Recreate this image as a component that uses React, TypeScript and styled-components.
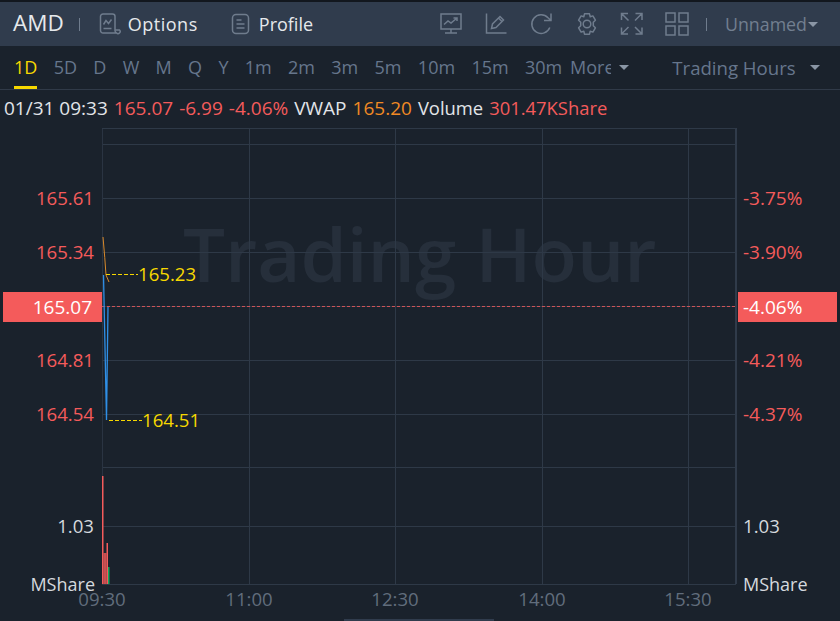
import styled, { createGlobalStyle } from "styled-components";

const FONT = `"Open Sans", "Noto Sans", "Liberation Sans", sans-serif`;
const RED = "#f45b5b";
const YELLOW = "#f7d800";
const GRID = "#2e3947";

const GlobalStyle = createGlobalStyle`
  html, body {
    margin: 0;
    padding: 0;
    background: #1a222c;
  }
  * {
    box-sizing: border-box;
  }
`;

const tabs = ["1D", "5D", "D", "W", "M", "Q", "Y", "1m", "2m", "3m", "5m", "10m", "15m", "30m"];
const priceLabels = [
  { y: 73, text: "165.61" },
  { y: 127, text: "165.34" },
  { y: 235, text: "164.81" },
  { y: 289, text: "164.54" },
];
const percentLabels = [
  { y: 73, text: "-3.75%" },
  { y: 127, text: "-3.90%" },
  { y: 235, text: "-4.21%" },
  { y: 289, text: "-4.37%" },
];
const hLines = [19, 73, 127, 181, 235, 289, 342, 401, 459];
const vLines = [147, 293, 440, 586];
const times = [
  { x: 102, text: "09:30" },
  { x: 249, text: "11:00" },
  { x: 395, text: "12:30" },
  { x: 542, text: "14:00" },
  { x: 688, text: "15:30" },
];

const IconSvg = ({ children }: { children: React.ReactNode }) => (
  <svg width="24" height="24" viewBox="0 0 24 24" fill="none" stroke="#6f7c8d" strokeWidth="1.5">
    {children}
  </svg>
);

const OptionsIcon = () => (
  <IconSvg>
    <path d="M18.500 21H5a2.500 2.500 0 0 1-2.500-2.500V4.500A2.500 2.500 0 0 1 5 2h9.500A2.500 2.500 0 0 1 17 4.500V18a3 3 0 0 0 1.500 3 2 2 0 0 0 3-3H17" />
    <path d="M5.500 12.500 8 8.500l2.500 3 3-4M5.500 16.500h8" />
  </IconSvg>
);

const ProfileIcon = () => (
  <IconSvg>
    <rect x="3.500" y="2.500" width="16" height="19" rx="3.500" />
    <path d="M7.500 8h5M7.500 12h8M7.500 16h8" />
  </IconSvg>
);

const MonitorIcon = () => (
  <IconSvg>
    <rect x="1" y="2" width="20" height="15" />
    <path d="M11 17v3.500M5 21h12M4 12.500l4-3.500 3 2 6-5M13.500 6H17v3" />
  </IconSvg>
);

const DrawIcon = () => (
  <IconSvg>
    <path d="M1.500 1.500v19.500h20" />
    <path d="M6.500 16.500l1-4.500L15 4.500l3.500 3.500L11 15.500zM13.500 6l3.500 3.500" />
  </IconSvg>
);

const RefreshIcon = () => (
  <IconSvg>
    <path d="M19.800 15.500A9.300 9.300 0 1 1 18 5.800L20.500 8M21 1.500V8.500h-7" />
  </IconSvg>
);

const GearIcon = () => (
  <IconSvg>
    <circle cx="12" cy="12" r="3.800" />
    <path d="M9.500 1.800h5l.7 3 2.700-.9 2.500 4.300-2.100 2 0 3.600 2.100 2-2.500 4.300-2.700-.9-.7 3h-5l-.7-3-2.700.9-2.500-4.300 2.100-2 0-3.600-2.100-2 2.500-4.300 2.700.9z" strokeLinejoin="round" />
  </IconSvg>
);

const ExpandIcon = () => (
  <IconSvg>
    <path d="M1.500 8V1.500H8M1.500 1.500l7 7M22 8V1.500h-6.500M22 1.500l-7 7M1.500 15.500V22H8M1.500 22l7-7M22 15.500V22h-6.500M22 22l-7-7" />
  </IconSvg>
);

const LayoutIcon = () => (
  <IconSvg>
    <rect x="1" y="1" width="9" height="9" />
    <rect x="14" y="1" width="9" height="9" />
    <rect x="1" y="14" width="9" height="9" />
    <rect x="14" y="14" width="9" height="9" />
  </IconSvg>
);

const App = () => {
  return (
    <Page>
      <GlobalStyle />
      <Header>
        <Symbol>AMD</Symbol>
        <Divider />
        <HeaderLink $width={131}>
          <OptionsIcon />
          <LinkText $spacing={0.5}>Options</LinkText>
        </HeaderLink>
        <HeaderLink $width={130}>
          <ProfileIcon />
          <LinkText>Profile</LinkText>
        </HeaderLink>
        <Tools>
          <MonitorIcon />
          <DrawIcon />
          <RefreshIcon />
          <GearIcon />
          <ExpandIcon />
          <LayoutIcon />
        </Tools>
        <Divider />
        <Unnamed>
          Unnamed
          <Caret />
        </Unnamed>
      </Header>

      <TabRow>
        {tabs.map((t, i) => (
          <Tab key={t} $active={i === 0}>
            {t}
          </Tab>
        ))}
        <MoreText>More</MoreText>
        <Caret />
        <Session>
          Trading Hours
          <Caret />
        </Session>
      </TabRow>

      <InfoRow>
        <span>01/31 09:33</span>
        <Value $color={RED}>165.07</Value>
        <Value $color={RED}>-6.99</Value>
        <Value $color={RED}>-4.06%</Value>
        <span>VWAP</span>
        <Value $color="#f08a24">165.20</Value>
        <Value $color="#e2e5e9" $size={18.4}>Volume</Value>
        <Value $color={RED} $size={18.4}>301.47KShare</Value>
      </InfoRow>

      <Chart>
        <LeftAxis>
          {priceLabels.map((l) => (
            <AxisLabel key={l.text} $y={l.y} $color={RED}>
              {l.text}
            </AxisLabel>
          ))}
          <PriceTag $align="right">165.07</PriceTag>
          <AxisLabel $y={401} $color="#d5d9de">1.03</AxisLabel>
          <AxisLabel $y={459} $color="#d5d9de" $size={18} $inset={7}>MShare</AxisLabel>
        </LeftAxis>

        <Plot>
          <Watermark>Trading Hour</Watermark>
          <PlotSvg width="634" height="460" viewBox="0 0 634 460">
            {hLines.map((y) => (
              <line key={y} x1="0" x2="634" y1={y + 0.5} y2={y + 0.5} stroke={GRID} />
            ))}
            {vLines.map((x) => (
              <line key={x} x1={x + 0.5} x2={x + 0.5} y1="3" y2="459" stroke={GRID} />
            ))}
            <rect x="0" y="3" width="1" height="456" fill="#2a3442" />
            <rect x="633" y="3" width="2" height="456" fill="#303b4a" />
            <rect x="0" y="3" width="634" height="1" fill={GRID} />
            <line x1="0" x2="634" y1="181.500" y2="181.500" stroke={RED} strokeDasharray="3 2" strokeOpacity="0.8" />
            <path d="M1 112 Q3 134 4 150 L7 157" stroke="#d98a2b" fill="none" />
            <path d="M1.500 150 L4.500 295 L6 182" stroke="#2f8fe6" fill="none" strokeWidth="1.300" />
            <path d="M4 149.500H36M7 295.500H40" stroke={YELLOW} strokeDasharray="4 2" />
            <rect x="0" y="351" width="1.500" height="108" fill={RED} />
            <rect x="1.500" y="428" width="3" height="31" fill={RED} fillOpacity="0.8" />
            <rect x="4.500" y="418" width="1.500" height="41" fill={RED} />
            <rect x="6" y="442" width="1.500" height="17" fill="#12a85f" />
          </PlotSvg>
          <PriceNote $x={36} $y={149}>165.23</PriceNote>
          <PriceNote $x={40} $y={295}>164.51</PriceNote>
          <TimeAxis>
            {times.map((t) => (
              <TimeLabel key={t.text} $x={t.x - 102}>
                {t.text}
              </TimeLabel>
            ))}
          </TimeAxis>
        </Plot>

        <RightAxis>
          {percentLabels.map((l) => (
            <AxisLabel key={l.text} $y={l.y} $color={RED} $side="left" $size={19}>
              {l.text}
            </AxisLabel>
          ))}
          <PriceTag $align="left">-4.06%</PriceTag>
          <AxisLabel $y={401} $color="#d5d9de" $side="left">1.03</AxisLabel>
          <AxisLabel $y={459} $color="#d5d9de" $side="left" $size={18}>MShare</AxisLabel>
        </RightAxis>
      </Chart>
      <ScrollThumb />
    </Page>
  );
};

export default App;

const Page = styled.div`
  position: relative;
  width: 840px;
  height: 621px;
  overflow: hidden;
  background: #1a222c;
  font-family: ${FONT};
  border-top: 2px solid #12171e;
`;

const Header = styled.div`
  height: 44px;
  display: flex;
  align-items: center;
  padding: 0 0 0 13px;
  background: #303c4d;
  color: #e6e9ec;
`;

const Symbol = styled.div`
  font-size: 22.5px;
  line-height: 24px;
  margin: -2px 15px 0 0;
`;

const Divider = styled.div`
  width: 1px;
  height: 13px;
  background: #6f7c8d;
  margin-right: 18px;
`;

const HeaderLink = styled.div<{ $width: number }>`
  width: ${(props) => props.$width}px;
  display: flex;
  align-items: center;
  gap: 6px;
`;

const LinkText = styled.span<{ $spacing?: number }>`
  font-size: 18px;
  letter-spacing: ${(props) => props.$spacing ?? 0}px;
`;

const Tools = styled.div`
  display: flex;
  align-items: center;
  gap: 21px;
  margin-left: auto;
  margin-right: 17px;
`;

const Unnamed = styled.div`
  display: flex;
  align-items: center;
  gap: 1px;
  width: 115px;
  font-size: 17.8px;
  color: #727f90;
`;

const Caret = styled.span`
  display: inline-block;
  width: 0;
  height: 0;
  border-left: 5px solid transparent;
  border-right: 5px solid transparent;
  border-top: 5px solid #8a96a5;
`;

const TabRow = styled.div`
  height: 44px;
  display: flex;
  align-items: center;
  padding-left: 14px;
  gap: 16.3px;
  font-size: 18px;
  color: #66768c;
  border-bottom: 1px solid #303a48;
`;

const Tab = styled.div<{ $active?: boolean }>`
  height: 43px;
  line-height: 42px;
  color: ${(props) => (props.$active ? YELLOW : "#66768c")};
  border-bottom: 3px solid ${(props) => (props.$active ? YELLOW : "transparent")};
`;

const MoreText = styled.div`
  width: 41px;
  overflow: hidden;
  margin-left: -8.4px;
  margin-right: -8.4px;
  margin-bottom: 1px;
`;

const Session = styled.div`
  margin-left: 27px;
  display: flex;
  align-items: center;
  gap: 14px;
  white-space: nowrap;
  font-size: 18.6px;
`;

const InfoRow = styled.div`
  height: 35px;
  display: flex;
  align-items: center;
  gap: 6px;
  padding-left: 4px;
  font-size: 19px;
  color: #e2e5e9;
`;

const Value = styled.span<{ $color: string; $size?: number }>`
  color: ${(props) => props.$color};
  font-size: ${(props) => props.$size ?? 19}px;
`;

const Chart = styled.div`
  display: grid;
  grid-template-columns: 102px 634px 104px;
  height: 496px;
`;

const LeftAxis = styled.div`
  position: relative;
`;

const RightAxis = styled.div`
  position: relative;
`;

const AxisLabel = styled.div<{ $y: number; $color: string; $side?: string; $size?: number; $inset?: number }>`
  position: absolute;
  top: ${(props) => props.$y - 12}px;
  ${(props) => (props.$side === "left" ? "left: 7px;" : `right: ${props.$inset ?? 8}px;`)}
  line-height: 24px;
  font-size: ${(props) => props.$size ?? 18.6}px;
  color: ${(props) => props.$color};
`;

const PriceTag = styled.div<{ $align: string }>`
  position: absolute;
  top: 167px;
  height: 30px;
  width: 99px;
  line-height: 30px;
  font-size: 19px;
  color: #fff;
  background: ${RED};
  ${(props) =>
    props.$align === "left"
      ? "left: 2px; padding-left: 5px;"
      : "left: 3px; text-align: right; padding-right: 10px;"}
`;

const Plot = styled.div`
  position: relative;
`;

const PlotSvg = styled.svg`
  position: absolute;
  top: 0;
  left: 0;
  overflow: visible;
`;

const Watermark = styled.div`
  position: absolute;
  top: 78px;
  left: 81px;
  font-size: 74.5px;
  font-weight: 600;
  line-height: 100px;
  white-space: nowrap;
  color: #262f3b;
`;

const PriceNote = styled.div<{ $x: number; $y: number }>`
  position: absolute;
  left: ${(props) => props.$x}px;
  top: ${(props) => props.$y - 12}px;
  line-height: 24px;
  font-size: 18.6px;
  color: ${YELLOW};
`;

const TimeAxis = styled.div`
  position: absolute;
  top: 460px;
  left: 0;
  width: 634px;
  height: 30px;
`;

const TimeLabel = styled.div<{ $x: number }>`
  position: absolute;
  left: ${(props) => props.$x}px;
  transform: translateX(-50%);
  font-size: 18.6px;
  line-height: 28px;
  color: #616d7c;
`;

const ScrollThumb = styled.div`
  position: absolute;
  left: 344px;
  bottom: 0;
  width: 150px;
  height: 2px;
  background: #303c4d;
`;
